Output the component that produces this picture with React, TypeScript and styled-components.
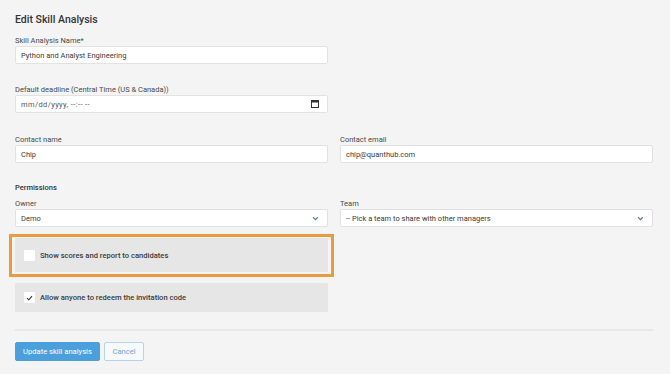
import React from "react";
import styled, { createGlobalStyle } from "styled-components";

const GlobalStyle = createGlobalStyle`
  html, body {
    margin: 0;
    padding: 0;
    background: #f4f4f4;
  }
  body {
    font-family: Roboto, "Liberation Sans", sans-serif;
    color: #333333;
  }
`;

const Page = styled.div`
  width: 670px;
  height: 374px;
  box-sizing: border-box;
  padding: 12px 17px 0 15px;
  overflow: hidden;
`;

const Title = styled.h1`
  margin: 0 0 3px;
  font-size: 10.5px;
  line-height: 15px;
  font-weight: 500;
  color: #333333;
`;

const Row = styled.div`
  display: grid;
  grid-template-columns: 313px 313px;
  column-gap: 12px;
`;

const Field = styled.div<{ $gap?: number }>`
  display: flex;
  flex-direction: column;
  margin-top: ${(p) => p.$gap ?? 0}px;
`;

const Label = styled.label`
  font-size: 7.5px;
  line-height: 11px;
  color: #4a4a4a;
`;

const Section = styled.div`
  margin-top: 19px;
  font-size: 7.5px;
  line-height: 11px;
  font-weight: 500;
  color: #333333;
`;

const Box = styled.div`
  height: 18px;
  box-sizing: border-box;
  background: #ffffff;
  border: 1px solid #e2e2e2;
  border-radius: 2px;
  display: flex;
  align-items: center;
  justify-content: space-between;
  padding: 0 8px 0 5px;
  font-size: 7.5px;
  color: #3a3a3a;
`;

const Muted = styled.span`
  color: #555555;
  letter-spacing: 0.4px;
`;

const Chevron = () => (
  <svg width="7" height="5" viewBox="0 0 8 6">
    <path d="M1.2 1.5 L4 4.3 L6.8 1.5" fill="none" stroke="#5d7ea3" strokeWidth="1.5" />
  </svg>
);

const Calendar = () => (
  <svg width="8" height="8" viewBox="0 0 8 8">
    <rect x="0.5" y="0.5" width="7" height="7" fill="none" stroke="#333" strokeWidth="1" />
    <rect x="0.5" y="0.5" width="7" height="2" fill="#333" />
  </svg>
);

const Options = styled.div`
  display: flex;
  flex-direction: column;
  gap: 6px;
  margin-top: 7px;
  width: 325px;
  margin-left: -6px;
`;

const Highlight = styled.div`
  border: 3px solid #ec9a3e;
  padding: 1px 3px 2px;
`;

const OptionCard = styled.div<{ $tall?: boolean }>`
  box-sizing: border-box;
  height: ${(p) => (p.$tall ? 34 : 29)}px;
  width: 313px;
  margin-left: ${(p) => (p.$tall ? 0 : 6)}px;
  background: #e6e6e6;
  border-radius: 1px;
  display: flex;
  align-items: center;
  gap: 5px;
  padding-left: 9px;
  font-size: 7.6px;
  font-weight: 500;
  color: #3a3a3a;
`;

const Check = styled.span`
  width: 11px;
  height: 11px;
  background: #ffffff;
  border-radius: 1px;
  display: flex;
  align-items: center;
  justify-content: center;
`;

const Divider = styled.hr`
  margin: 17px 0 0;
  border: none;
  border-top: 2px solid #e8e8e8;
  width: 638px;
`;

const Actions = styled.div`
  display: flex;
  gap: 4px;
  margin-top: 11px;
`;

const Button = styled.button<{ $primary?: boolean }>`
  height: 19px;
  box-sizing: border-box;
  padding: 0;
  white-space: nowrap;
  font-family: Roboto, "Liberation Sans", sans-serif;
  font-size: 7.6px;
  border-radius: 2px;
  background: ${(p) => (p.$primary ? "#4a9fdc" : "#f7f9fb")};
  color: ${(p) => (p.$primary ? "#ffffff" : "#6ea7d8")};
  border: 1px solid ${(p) => (p.$primary ? "#4a9fdc" : "#b4d3ec")};
  width: ${(p) => (p.$primary ? 85 : 40)}px;
`;

export default function App() {
  return (
    <>
      <GlobalStyle />
      <Page>
        <Title>Edit Skill Analysis</Title>
        <Row>
          <Field $gap={5}>
            <Label>Skill Analysis Name*</Label>
            <Box>Python and Analyst Engineering</Box>
          </Field>
        </Row>
        <Row>
          <Field $gap={20}>
            <Label>Default deadline (Central Time (US &amp; Canada))</Label>
            <Box>
              <Muted>mm/dd/yyyy, --:-- --</Muted>
              <Calendar />
            </Box>
          </Field>
        </Row>
        <Row>
          <Field $gap={21}>
            <Label>Contact name</Label>
            <Box>Chip</Box>
          </Field>
          <Field $gap={21}>
            <Label>Contact email</Label>
            <Box>chip@quanthub.com</Box>
          </Field>
        </Row>
        <Section>Permissions</Section>
        <Row>
          <Field $gap={5}>
            <Label>Owner</Label>
            <Box>
              Demo
              <Chevron />
            </Box>
          </Field>
          <Field $gap={5}>
            <Label>Team</Label>
            <Box>
              -- Pick a team to share with other managers
              <Chevron />
            </Box>
          </Field>
        </Row>
        <Options>
          <Highlight>
            <OptionCard $tall>
              <Check />
              Show scores and report to candidates
            </OptionCard>
          </Highlight>
          <OptionCard>
            <Check>
              <svg width="7" height="6" viewBox="0 0 7 6">
                <path d="M1 3.2 L2.8 4.8 L6 1.2" fill="none" stroke="#333" strokeWidth="1.1" />
              </svg>
            </Check>
            Allow anyone to redeem the invitation code
          </OptionCard>
        </Options>
        <Divider />
        <Actions>
          <Button $primary>Update skill analysis</Button>
          <Button>Cancel</Button>
        </Actions>
      </Page>
    </>
  );
}
